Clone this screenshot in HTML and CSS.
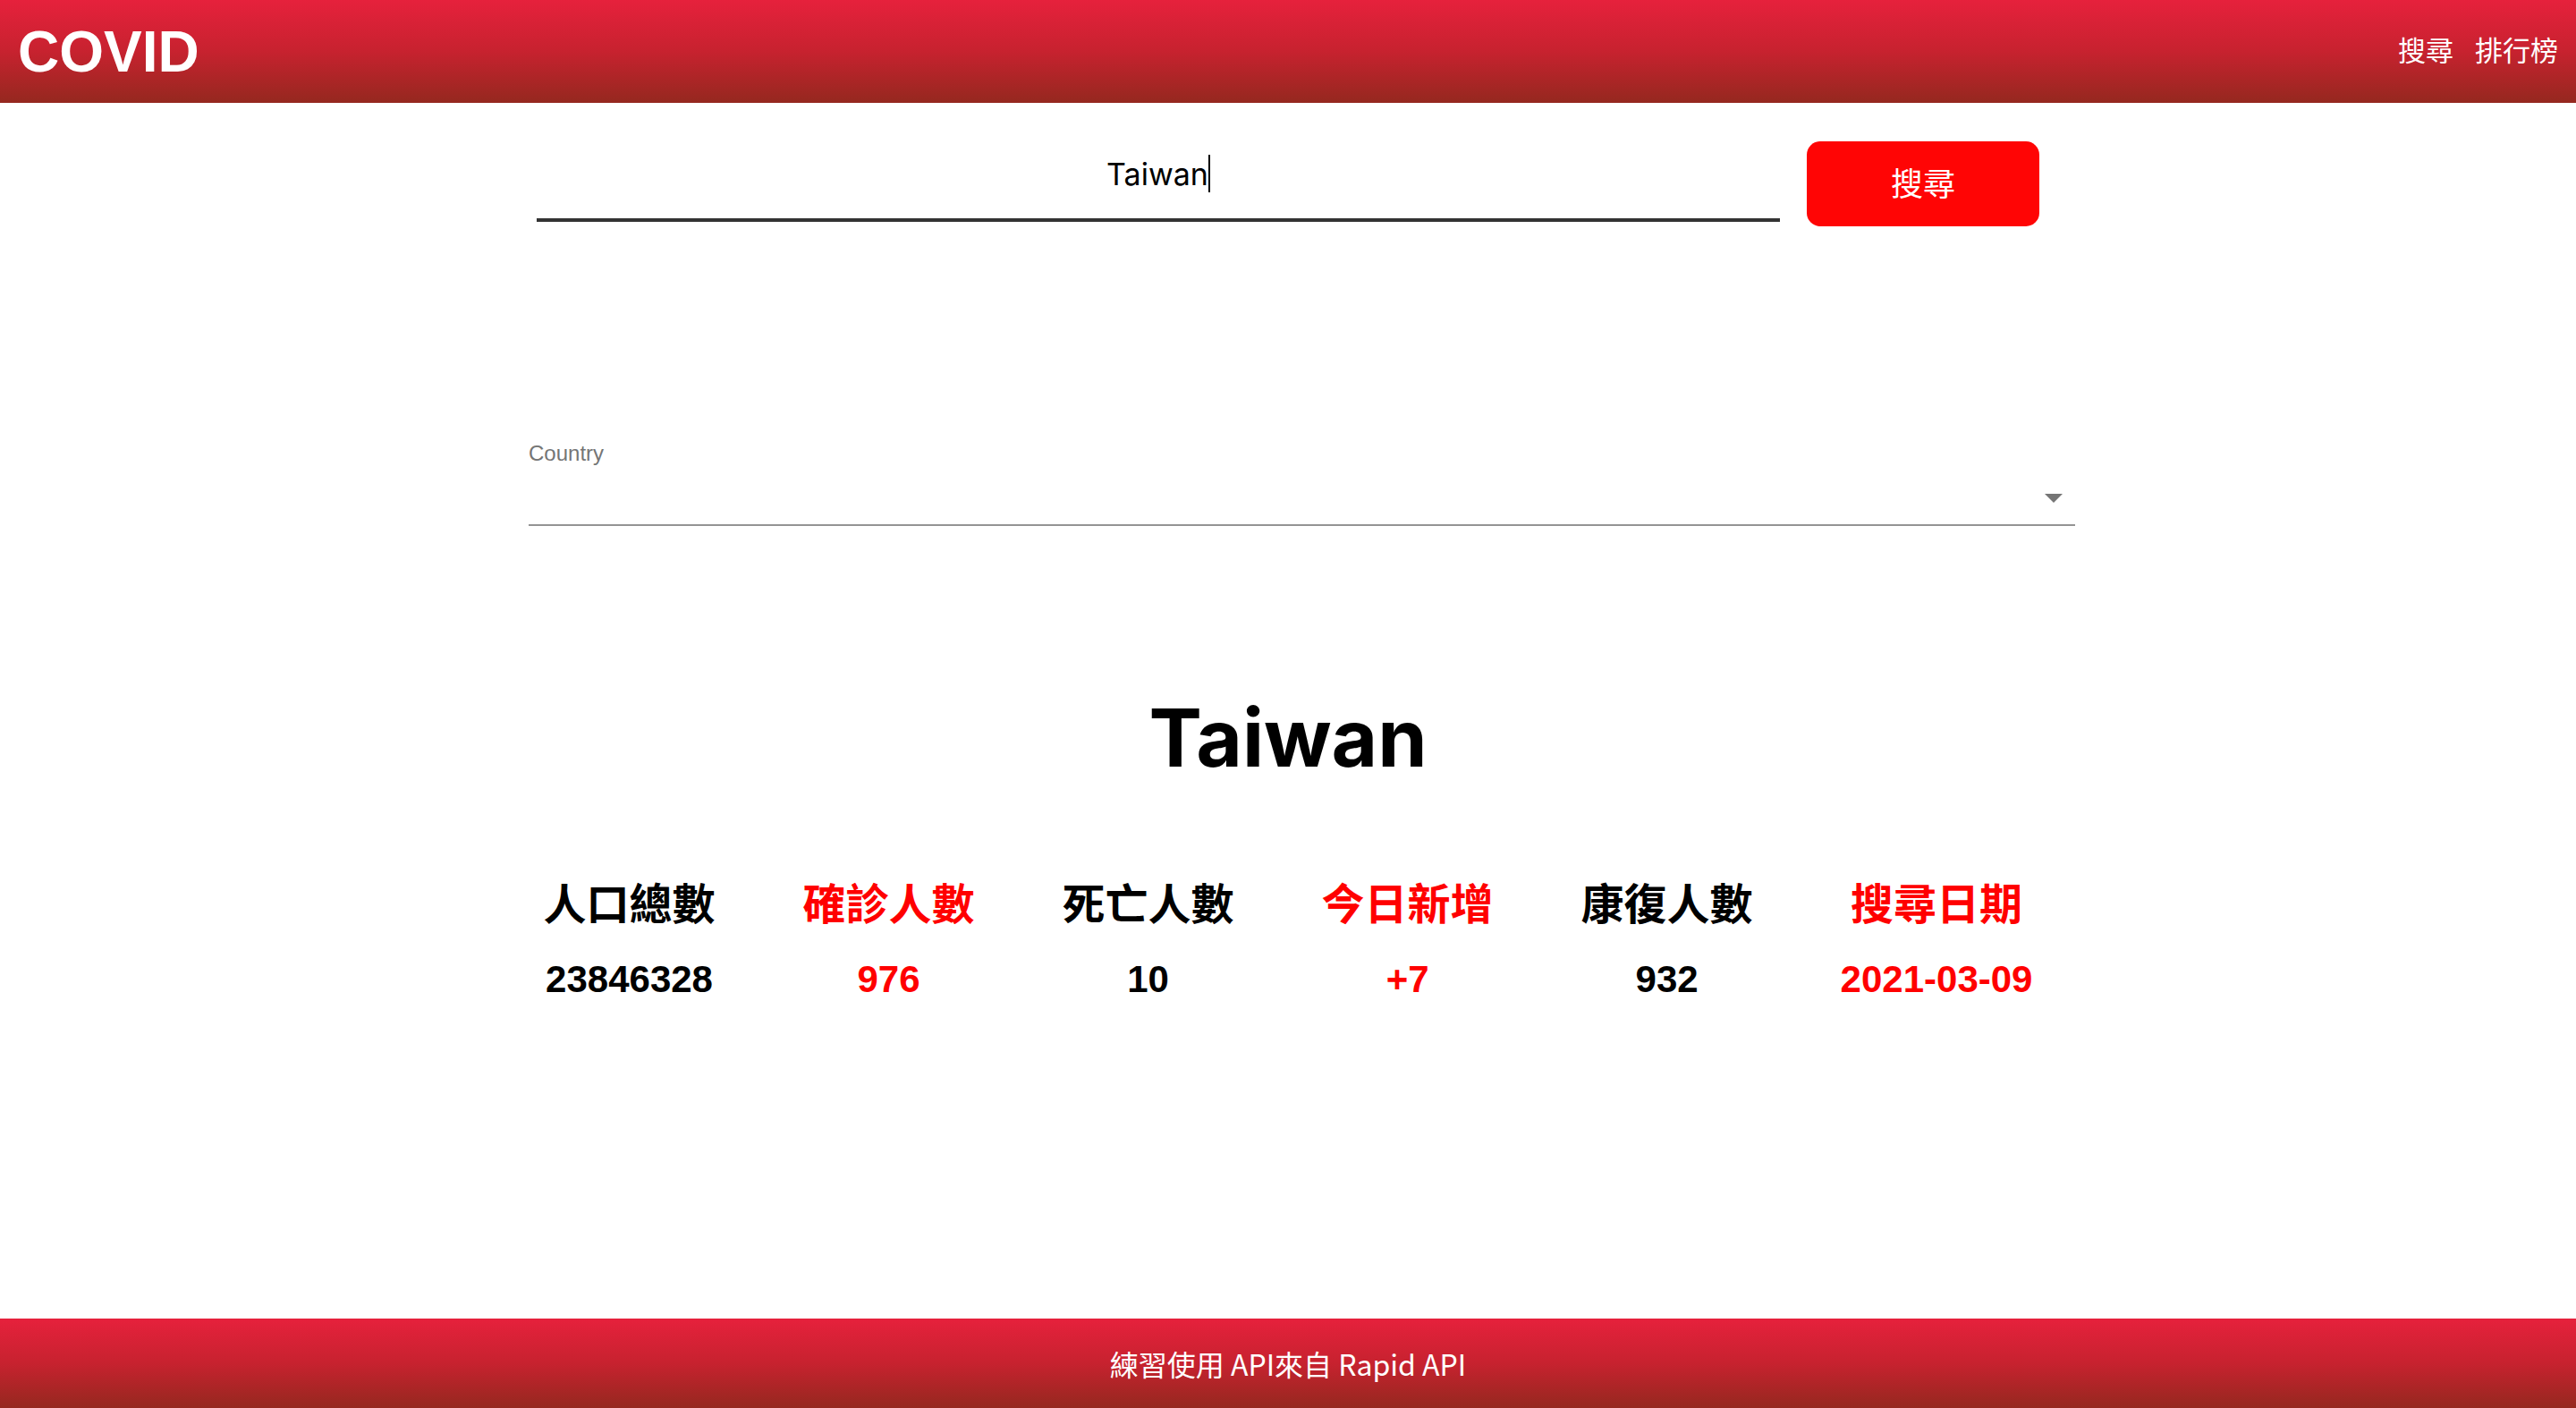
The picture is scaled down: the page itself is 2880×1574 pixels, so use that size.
FILE: index.html
```html
<!DOCTYPE html>
<html lang="zh-Hant">
<head>
<meta charset="utf-8">
<title>COVID</title>
<link rel="stylesheet" href="styles.css">
</head>
<body>
<div class="page">
  <header class="topbar">
    <div class="brand">COVID</div>
    <nav class="nav">
      <a class="nav-link">搜尋</a>
      <a class="nav-link">排行榜</a>
    </nav>
  </header>

  <main class="content">
    <div class="search-row">
      <div class="search-field">
        <span class="search-value">Taiwan</span><span class="caret"></span>
      </div>
      <button class="search-btn">搜尋</button>
    </div>

    <div class="select-wrap">
      <div class="select-label">Country</div>
      <div class="select-box">
        <svg class="select-arrow" viewBox="0 0 24 24" width="48" height="48"><path d="M7 10l5 5 5-5z" fill="#757575"/></svg>
      </div>
    </div>

    <h1 class="country-title">Taiwan</h1>

    <div class="stats">
      <div class="stat">
        <div class="stat-label">人口總數</div>
        <div class="stat-value">23846328</div>
      </div>
      <div class="stat red">
        <div class="stat-label">確診人數</div>
        <div class="stat-value">976</div>
      </div>
      <div class="stat">
        <div class="stat-label">死亡人數</div>
        <div class="stat-value">10</div>
      </div>
      <div class="stat red">
        <div class="stat-label">今日新增</div>
        <div class="stat-value">+7</div>
      </div>
      <div class="stat">
        <div class="stat-label">康復人數</div>
        <div class="stat-value">932</div>
      </div>
      <div class="stat red">
        <div class="stat-label">搜尋日期</div>
        <div class="stat-value">2021-03-09</div>
      </div>
    </div>
  </main>

  <footer class="footer">練習使用 API來自 Rapid API</footer>
</div>
</body>
</html>
```

FILE: styles.css
```css
* { box-sizing: border-box; }

html, body {
  margin: 0;
  padding: 0;
  background: #ffffff;
}

body {
  font-family: "Liberation Sans", "Noto Sans CJK TC", sans-serif;
  color: #000;
}

.page {
  min-height: 100vh;
  display: flex;
  flex-direction: column;
}

.topbar {
  height: 115px;
  flex: none;
  display: flex;
  align-items: center;
  justify-content: space-between;
  padding: 0 20px 0 20px;
  background: linear-gradient(to bottom, #e6213c 0%, #c7222f 50%, #95281f 100%);
}

.brand {
  font-family: "Liberation Sans", Arial, sans-serif;
  font-weight: 700;
  font-size: 64px;
  line-height: 64px;
  color: #fff;
}

.nav {
  display: flex;
  gap: 24px;
  margin-bottom: 6px;
}

.nav-link {
  font-family: "Noto Sans CJK TC", sans-serif;
  font-size: 31px;
  line-height: 40px;
  color: #fff;
  text-decoration: none;
}

.content {
  flex: 1;
  display: flex;
  flex-direction: column;
}

.search-row {
  display: flex;
  justify-content: center;
  align-items: flex-start;
  gap: 30px;
  margin-top: 43px;
}

.search-field {
  width: 1390px;
  padding: 13px 0 25px 0;
  border-bottom: 4px solid #333333;
  text-align: center;
  font-family: Inter, "Liberation Sans", sans-serif;
  font-size: 34px;
  line-height: 48px;
  color: #000;
}

.caret {
  display: inline-block;
  width: 2px;
  height: 42px;
  background: #000;
  vertical-align: -8px;
}

.search-btn {
  width: 260px;
  height: 95px;
  border: none;
  border-radius: 15px;
  background: #ff0505;
  color: #fff;
  font-family: "Noto Sans CJK TC", sans-serif;
  font-size: 36px;
  line-height: 1;
  padding: 0 0 6px 0;
}

.select-wrap {
  width: 1729px;
  margin-top: 242px;
  margin-left: calc(50% - 849px);
}

.select-label {
  font-family: "Liberation Sans", Arial, sans-serif;
  font-size: 24px;
  line-height: 24px;
  color: #757575;
}

.select-box {
  position: relative;
  height: 69px;
  border-bottom: 2px solid #949494;
}

.select-arrow {
  position: absolute;
  right: 0;
  top: 13px;
}

.country-title {
  margin: 182px 0 0 0;
  text-align: center;
  font-family: Inter, "Liberation Sans", sans-serif;
  font-weight: 700;
  font-size: 89px;
  line-height: 110px;
}

.stats {
  display: flex;
  justify-content: center;
  gap: 98px;
  margin-top: 98px;
}

.stat {
  display: flex;
  flex-direction: column;
  align-items: center;
}

.stat.red { color: #ff0000; }

.stat-label {
  font-family: "Noto Sans CJK TC", sans-serif;
  font-weight: 700;
  font-size: 48px;
  line-height: 58px;
}

.stat-value {
  margin-top: 35px;
  font-family: "Liberation Sans", Arial, sans-serif;
  font-weight: 700;
  font-size: 42px;
  line-height: 48px;
}

.footer {
  flex: none;
  height: 100px;
  display: flex;
  align-items: center;
  justify-content: center;
  background: linear-gradient(to bottom, #e6213c 0%, #c7222f 50%, #95281f 100%);
  color: #fff;
  font-family: "Noto Sans CJK TC", sans-serif;
  font-size: 32px;
}
```
